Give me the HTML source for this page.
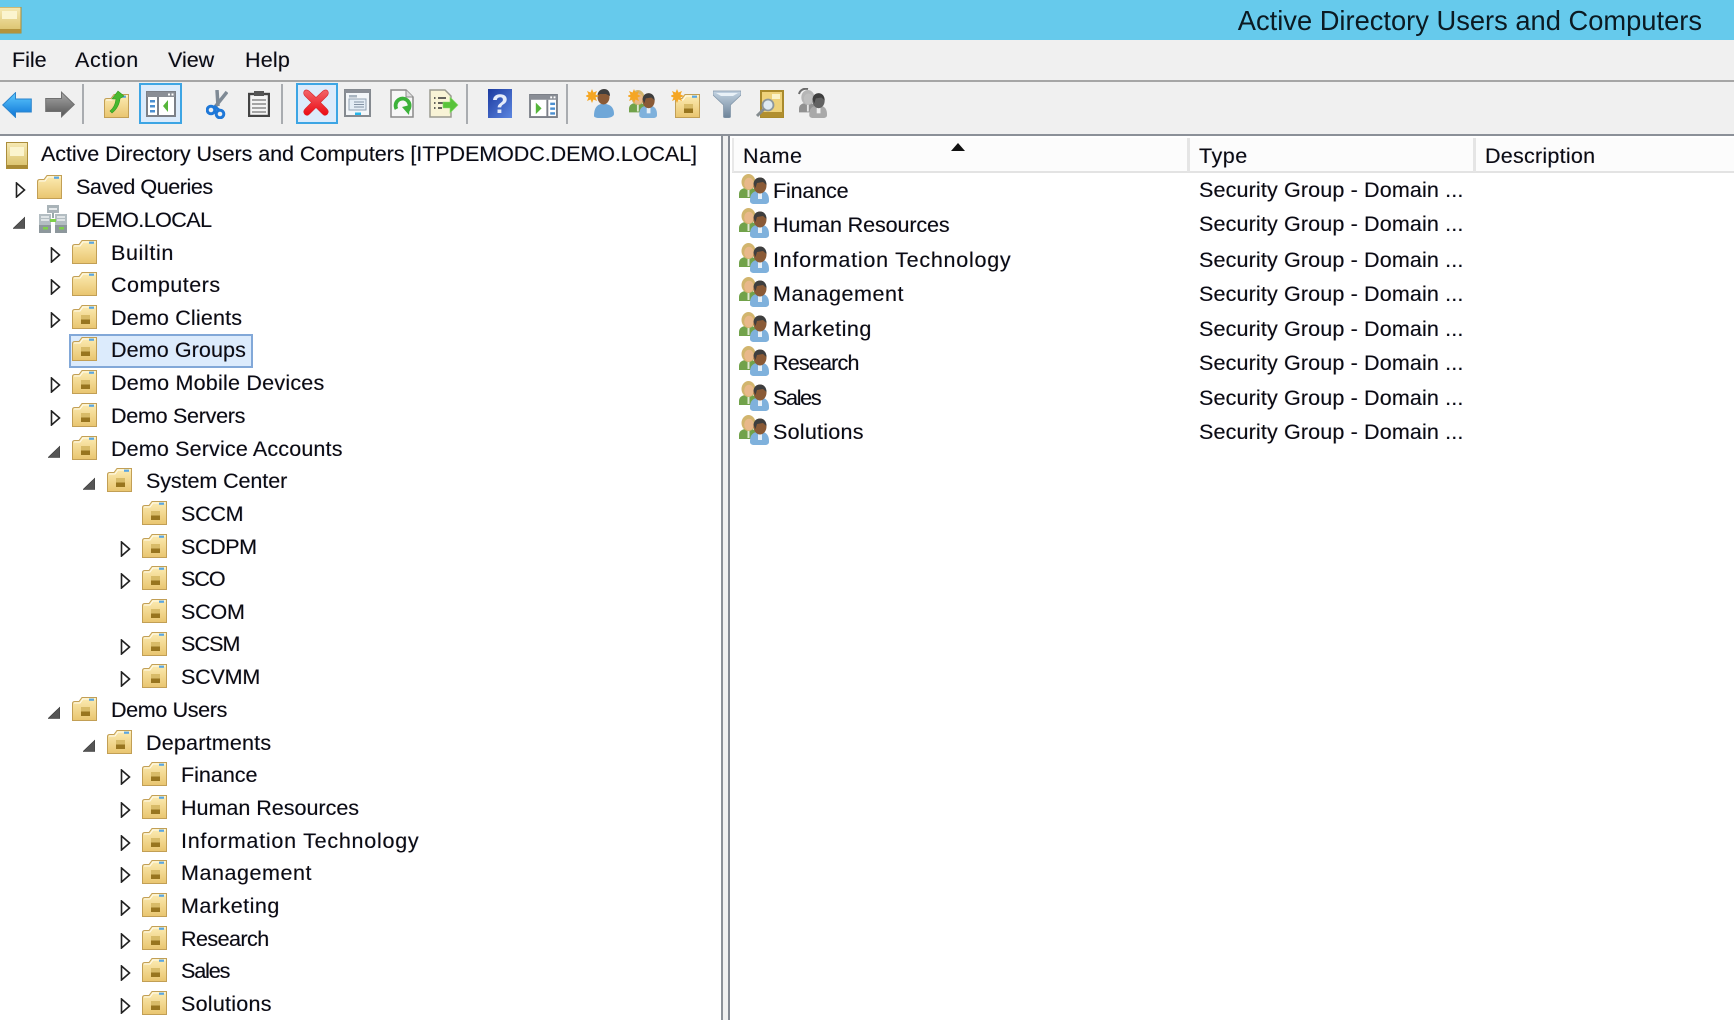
<!DOCTYPE html>
<html lang="en"><head><meta charset="utf-8"><title>Active Directory Users and Computers</title>
<style>
html,body{margin:0;padding:0;width:1734px;height:1020px;overflow:hidden;background:#fff}
body{position:relative;font-family:"Liberation Sans",Arial,sans-serif;font-size:21.5px;color:#0a0a14}
.a{position:absolute}
#title{left:0;top:0;width:1734px;height:40px;background:#66caec}
#ttext{position:absolute;right:32px;top:3px;line-height:36px;font-size:27.3px;color:#0b1a22;white-space:nowrap}
#menu{left:0;top:40px;width:1734px;height:40px;background:#f0f0f0}
#menu span{position:absolute;top:3px;line-height:34px}
#tb{left:0;top:82px;width:1734px;height:52px;background:#f0f0f0}
.l1{left:0;width:1734px;height:2px}
.sep{top:84px;width:2px;height:40px;background:#a9acb0}
.btn{top:83px;height:37px;background:#dcebfb;border:2px solid #3da5e4}
.t{position:absolute;height:32px;line-height:32px;white-space:nowrap;text-shadow:-.45px 0 rgba(230,120,0,.35),.45px 0 rgba(0,110,240,.35)}
.t svg{position:absolute;overflow:visible}
.t span{position:absolute;top:0}
.i{left:22px;top:4px;width:26px;height:24px}
.x{left:0;width:12px;height:16px;top:11px}
.n span{left:61px;top:1px}
.r span{left:34px}
.g{left:0;top:-1px;width:30px;height:30px}
.h{position:absolute;top:140px;line-height:32px;white-space:nowrap;text-shadow:-.45px 0 rgba(230,120,0,.35),.45px 0 rgba(0,110,240,.35)}
#menu span,.ty{text-shadow:-.45px 0 rgba(230,120,0,.35),.45px 0 rgba(0,110,240,.35)}
.ty{position:absolute;left:1199px;line-height:32px;white-space:nowrap;letter-spacing:.15px}
#all{position:absolute;left:0;top:0;width:1734px;height:1020px;filter:blur(.35px)}
</style></head>
<body>
<svg width="0" height="0" style="position:absolute">
<defs>
<linearGradient id="fg" x1="0" y1="0" x2="0" y2="1"><stop offset="0" stop-color="#fcecb4"/><stop offset="1" stop-color="#e9c56f"/></linearGradient>
<linearGradient id="rootg" x1="0" y1="0" x2="0" y2="1"><stop offset="0" stop-color="#f6e9b4"/><stop offset="1" stop-color="#d9c069"/></linearGradient>
<linearGradient id="bl" x1="0" y1="0" x2="0" y2="1"><stop offset="0" stop-color="#5fcbff"/><stop offset="1" stop-color="#0d74d6"/></linearGradient>
<linearGradient id="gy" x1="0" y1="0" x2="0" y2="1"><stop offset="0" stop-color="#a9a9a9"/><stop offset="1" stop-color="#555"/></linearGradient>
<linearGradient id="rd" x1="0" y1="0" x2="0" y2="1"><stop offset="0" stop-color="#f2656a"/><stop offset="1" stop-color="#ec0b14"/></linearGradient>
<linearGradient id="hb" x1="0" y1="0" x2="1" y2="1"><stop offset="0" stop-color="#1c3aa0"/><stop offset="1" stop-color="#5c86e0"/></linearGradient>
<linearGradient id="fu" x1="0" y1="0" x2="0" y2="1"><stop offset="0" stop-color="#c3d3e2"/><stop offset="1" stop-color="#6e8499"/></linearGradient>
<symbol id="ou" viewBox="0 0 26 24"><path d="M.5 6.5C.5 5 1.5 4.5 3 4.5H7L10 .5H24.5V23.5H.5Z" fill="url(#fg)" stroke="#c29f55"/><path d="M2 6H8L11 2H23.5" fill="none" stroke="#fff" stroke-opacity=".8"/><rect x="17" y="1.6" width="5" height="2.2" fill="#5aa6e2"/><rect x="9" y="10" width="9" height="4.500" fill="#d8bb68"/><rect x="9" y="14.500" width="9" height="4.500" fill="#98751f"/></symbol>
<symbol id="pf" viewBox="0 0 26 24"><path d="M.5 6.5C.5 5 1.5 4.5 3 4.5H7L10 .5H24.5V23.5H.5Z" fill="url(#fg)" stroke="#c29f55"/><path d="M2 6H8L11 2H23.5" fill="none" stroke="#fff" stroke-opacity=".8"/><rect x="17" y="1.6" width="5" height="2.2" fill="#5aa6e2"/></symbol>
<symbol id="c" viewBox="0 0 12 16"><path d="M1.5 1V15L9.5 8Z" fill="#fff" stroke="#222" stroke-width="1.6"/></symbol>
<symbol id="e" viewBox="0 0 12 16"><path d="M0 14.5H12V3Z" fill="#555" stroke="#333" stroke-width=".6"/></symbol>
<symbol id="grp" viewBox="0 0 30 30">
<path d="M0 20C0 16 3 14.500 6 14H13C16 15 18 17 18 21V24H0Z" fill="#71a24a"/><rect x="8.500" y="15" width="2" height="8" fill="#dfe8cf"/>
<ellipse cx="9.500" cy="8" rx="7" ry="8" fill="#d2b56e"/><ellipse cx="10" cy="9.500" rx="4.800" ry="5.800" fill="#e8b88a"/>
<path d="M11 26C11 20 14 17.500 18 17H24C28 18 30 21 30 26V27C30 29 28 30 26 30H15C13 30 11 29 11 27Z" fill="#7fb1dc"/><rect x="19" y="18" width="4" height="7" fill="#e6f0f8"/>
<ellipse cx="21" cy="11.500" rx="6.500" ry="8" fill="#8a5a36"/><path d="M14.500 10C15 5 18 3.500 21 3.500C25 3.500 27.500 6.500 27.500 11L24 8L18 9L16.500 14Z" fill="#3e3e3e"/>
</symbol>
</defs></svg>
<div id="all">
<div class="a" id="title">
<svg class="a" style="left:0;top:7px" width="22" height="27" viewBox="0 0 22 27"><rect x="-2" y="0" width="23" height="26" fill="url(#rootg)" stroke="#a98a35"/><rect x="2" y="4" width="15" height="8" fill="#fbf4cf"/><rect x="-2" y="22" width="23" height="4" fill="#b3933c"/></svg>
<div id="ttext">Active Directory Users and Computers</div></div>
<div class="a" id="menu"><span style="left:12px">File</span><span style="left:75px;letter-spacing:.7px">Action</span><span style="left:168px">View</span><span style="left:245px;letter-spacing:.2px">Help</span></div>
<div class="a l1" style="top:80px;height:2px;background:#a6a6a6"></div>
<div class="a" id="tb"></div>
<div class="a l1" style="top:134px;background:#8b9098"></div>

<div class="a btn" style="left:139px;width:39px"></div>
<div class="a btn" style="left:296px;width:38px"></div>
<div class="a sep" style="left:82px"></div><div class="a sep" style="left:281px"></div><div class="a sep" style="left:466px"></div><div class="a sep" style="left:566px"></div>

<svg class="a" style="left:2px;top:92px" width="30" height="26" viewBox="0 0 30 26"><path d="M.7 13 13.500 .7V7H29.300V20H13.500V25.300Z" fill="url(#bl)" stroke="#2c84cc"/></svg>
<svg class="a" style="left:45px;top:91px" width="30" height="27" viewBox="0 0 30 26"><path d="M29.300 13 16.500 .7V7H.7V20H16.500V25.300Z" fill="url(#gy)" stroke="#707070"/></svg>
<svg class="a" style="left:104px;top:90px" width="26" height="28" viewBox="0 0 26 28"><use href="#pf" y="4" width="26" height="24"/><path d="M6 21C10 18 11.500 13 12 9H8L14 1 20 6 16 8.500C15.500 14 13 19 8 23Z" fill="#48b82f" stroke="#2f9a1e" stroke-width=".6"/></svg>
<svg class="a" style="left:146px;top:91px" width="30" height="26" viewBox="0 0 30 26"><rect x="1" y="1" width="28" height="24" fill="#fff" stroke="#7c8088" stroke-width="2"/><rect x="1" y="1" width="28" height="5" fill="#8a8e96"/><rect x="22" y="2.500" width="2" height="2" fill="#fff"/><rect x="25.500" y="2.500" width="2" height="2" fill="#fff"/><rect x="11" y="6" width="2" height="18" fill="#7c8088"/><rect x="4" y="9" width="5" height="2.500" fill="#4b8fd0"/><rect x="4" y="14" width="5" height="2.500" fill="#4b8fd0"/><rect x="4" y="19" width="5" height="2.500" fill="#4b8fd0"/><path d="M22 9V21L17 15Z" fill="#55b53a"/></svg>
<svg class="a" style="left:206px;top:90px" width="22" height="29" viewBox="0 0 22 29"><path d="M11 0 12 16M21 2 9 17" stroke="#7f8a95" stroke-width="3.500" fill="none"/><circle cx="5" cy="20" r="3.800" fill="none" stroke="#1f78d8" stroke-width="3"/><circle cx="14" cy="24" r="3.800" fill="none" stroke="#1f78d8" stroke-width="3"/><path d="M8 16 13 20" stroke="#1f78d8" stroke-width="3"/></svg>
<svg class="a" style="left:248px;top:91px" width="22" height="26" viewBox="0 0 22 26"><rect x="1" y="3" width="20" height="22" fill="#f4f4f4" stroke="#444" stroke-width="2.400"/><rect x="6" y="0" width="10" height="5" fill="#555"/><path d="M4 9H18M4 13H18M4 17H18M4 21H18" stroke="#999" stroke-width="1.800"/></svg>
<svg class="a" style="left:301px;top:88px" width="30" height="29" viewBox="0 0 30 29"><path d="M3 3.500C4 1.500 6 1.500 8 3L15 9.500 22 3C24 1.500 26 1.500 27 3.500S27 7 25.500 8.500L19.500 14.500 25.500 20.500C27 22 28 24 26.500 26S23 27.500 21.500 26L15 19.500 8.500 26C7 27.500 5 28 3.500 26S3 22 4.500 20.500L10.500 14.500 4.500 8.500C3 7 2 5.500 3 3.500Z" fill="url(#rd)" stroke="#d9262c" stroke-width=".6"/></svg>
<svg class="a" style="left:344px;top:89px" width="27" height="28" viewBox="0 0 27 28"><rect x="1" y="1" width="25" height="26" fill="#f3f6f9" stroke="#858a90" stroke-width="2"/><rect x="1" y="1" width="25" height="3" fill="#8a8e96"/><rect x="5" y="6" width="8" height="2.500" fill="#a8b4c0"/><rect x="5" y="10" width="17" height="11" fill="#e4edf5" stroke="#93a3b4" stroke-width="1"/><path d="M10 13H20M10 15.500H20M10 18H20" stroke="#8191a3"/><rect x="11" y="23.500" width="6" height="2.500" fill="#27b5ea"/></svg>
<svg class="a" style="left:390px;top:89px" width="24" height="29" viewBox="0 0 24 29"><path d="M1 1H16L23 8V28H1Z" fill="#f7f7f7" stroke="#8a8a8a" stroke-width="1.500"/><path d="M16 1V8H23" fill="#ddd" stroke="#8a8a8a"/><path d="M6.500 20A7 7 0 1 1 17 22" fill="none" stroke="#3cb23a" stroke-width="3.800"/><path d="M12 18 20 16 19 26Z" fill="#3cb23a"/></svg>
<svg class="a" style="left:429px;top:89px" width="30" height="29" viewBox="0 0 30 29"><path d="M1 1H16L22 7V28H1Z" fill="#f8f3d6" stroke="#9a9a90" stroke-width="1.500"/><path d="M5 9H6.500M9 9H17M5 14H6.500M9 14H15M5 19H6.500M9 19H13" stroke="#333" stroke-width="1.500"/><path d="M14 13H21V8L29 16 21 24V19H14Z" fill="#58c33a" stroke="#8bd96f" stroke-width=".6"/></svg>
<svg class="a" style="left:488px;top:89px" width="24" height="29" viewBox="0 0 24 29"><rect width="24" height="29" fill="url(#hb)"/><text x="12" y="24" text-anchor="middle" font-family="Liberation Sans" font-size="27" font-weight="bold" fill="#e6ecfa">?</text></svg>
<svg class="a" style="left:529px;top:94px" width="29" height="24" viewBox="0 0 30 25"><rect x="1" y="1" width="28" height="23" fill="#fff" stroke="#7c8088" stroke-width="2"/><rect x="1" y="1" width="28" height="5" fill="#8a8e96"/><rect x="22" y="2.500" width="2" height="2" fill="#fff"/><rect x="25.500" y="2.500" width="2" height="2" fill="#fff"/><rect x="18" y="6" width="2" height="18" fill="#7c8088"/><rect x="22" y="9" width="5" height="2.500" fill="#4b8fd0"/><rect x="22" y="14" width="5" height="2.500" fill="#4b8fd0"/><rect x="22" y="19" width="5" height="2.500" fill="#4b8fd0"/><path d="M7 9V21L13 15Z" fill="#55b53a"/></svg>
<svg class="a" style="left:586px;top:89px" width="28" height="29" viewBox="0 0 28 29"><path d="M8 27C8 19 11 16 15 15H20C25 16 28 19 28 25 28 27 25 29 20 29H13C10 29 8 28 8 27Z" fill="#6fa7d8"/><ellipse cx="17.500" cy="8" rx="6" ry="7.500" fill="#8a5a36"/><path d="M11.500 6C12 2 15 0 18 0 22 0 24 3 24 7L20 5H14Z" fill="#3e3e3e"/><path d="M6 0 7.500 3.500 11 2 9.500 5.500 13 7 9.500 8.500 11 12 7.500 10.500 6 14 4.500 10.500 1 12 2.500 8.500-1 7 2.500 5.500 1 2 4.500 3.500Z" fill="#f5a623"/></svg>
<svg class="a" style="left:628px;top:89px" width="30" height="29" viewBox="0 0 30 29"><use href="#grp" x="0" y="1" width="30" height="28"/><path d="M6 0 7.500 3.500 11 2 9.500 5.500 13 7 9.500 8.500 11 12 7.500 10.500 6 14 4.500 10.500 1 12 2.500 8.500-1 7 2.500 5.500 1 2 4.500 3.500Z" fill="#f5a623"/></svg>
<svg class="a" style="left:671px;top:89px" width="30" height="29" viewBox="0 0 30 29"><use href="#ou" x="4" y="5" width="26" height="24"/><path d="M6 0 7.500 3.500 11 2 9.500 5.500 13 7 9.500 8.500 11 12 7.500 10.500 6 14 4.500 10.500 1 12 2.500 8.500-1 7 2.500 5.500 1 2 4.500 3.500Z" fill="#f5a623"/></svg>
<svg class="a" style="left:713px;top:90px" width="28" height="28" viewBox="0 0 28 28"><path d="M0 1H28V5L17.500 15V27C17.500 28 10.500 28 10.500 27V15L0 5Z" fill="url(#fu)" stroke="#7f93a6" stroke-width=".7"/><path d="M3 3H25L20 6H8Z" fill="#e9f1f7"/></svg>
<svg class="a" style="left:756px;top:90px" width="28" height="28" viewBox="0 0 28 28"><rect x="5" y="1" width="22" height="26" fill="#eed27a" stroke="#a98a2c" stroke-width="2"/><rect x="5" y="22" width="22" height="5" fill="#b18f2f"/><rect x="16" y="4" width="8" height="5" fill="#fbf3c8"/><circle cx="12" cy="15" r="5.500" fill="#dfeaf0" stroke="#8d979c" stroke-width="1.800"/><path d="M8 19 1 26" stroke="#858c8f" stroke-width="3"/></svg>
<svg class="a" style="left:798px;top:88px" width="30" height="30" viewBox="0 0 30 30"><g style="filter:grayscale(1)"><use href="#grp" x="0" y="2" width="30" height="28"/></g><path d="M1 6C2 2 6 0 10 1" fill="none" stroke="#6c6c6c" stroke-width="2"/></svg>

<div class="a" style="left:721px;top:136px;width:2px;height:884px;background:#8c9198"></div>
<div class="a" style="left:723px;top:136px;width:5px;height:884px;background:#f0f0f0"></div>
<div class="a" style="left:728px;top:136px;width:2px;height:884px;background:#858a93"></div>

<div class="a" style="left:732px;top:138px;width:1002px;height:33px;background:#fcfcfc;border-bottom:2px solid #e3e3e3"></div>
<div class="a" style="left:732px;top:138px;width:2px;height:34px;background:#e8e8e8"></div>
<div class="a" style="left:1187px;top:138px;width:3px;height:34px;background:#e5e5e5"></div>
<div class="a" style="left:1473px;top:138px;width:3px;height:34px;background:#e5e5e5"></div>
<div class="h" style="left:743px;letter-spacing:.55px">Name</div><div class="h" style="left:1199px;letter-spacing:.55px">Type</div><div class="h" style="left:1485px;letter-spacing:.25px">Description</div>
<svg class="a" style="left:951px;top:143px" width="14" height="8" viewBox="0 0 14 8"><path d="M7 0 14 8H0Z" fill="#111"/></svg>

<div class="t r" style="left:739px;top:175px"><svg class="g"><use href="#grp"/></svg><span style="letter-spacing:-.15px">Finance</span></div><div class="ty" style="top:174px">Security Group - Domain ...</div>
<div class="t r" style="left:739px;top:209px"><svg class="g"><use href="#grp"/></svg><span style="letter-spacing:-.1px">Human Resources</span></div><div class="ty" style="top:208px">Security Group - Domain ...</div>
<div class="t r" style="left:739px;top:244px"><svg class="g"><use href="#grp"/></svg><span style="letter-spacing:.75px">Information Technology</span></div><div class="ty" style="top:244px">Security Group - Domain ...</div>
<div class="t r" style="left:739px;top:278px"><svg class="g"><use href="#grp"/></svg><span style="letter-spacing:.55px">Management</span></div><div class="ty" style="top:278px">Security Group - Domain ...</div>
<div class="t r" style="left:739px;top:313px"><svg class="g"><use href="#grp"/></svg><span style="letter-spacing:.49px">Marketing</span></div><div class="ty" style="top:313px">Security Group - Domain ...</div>
<div class="t r" style="left:739px;top:347px"><svg class="g"><use href="#grp"/></svg><span style="letter-spacing:-.8px">Research</span></div><div class="ty" style="top:347px">Security Group - Domain ...</div>
<div class="t r" style="left:739px;top:382px"><svg class="g"><use href="#grp"/></svg><span style="letter-spacing:-1.3px">Sales</span></div><div class="ty" style="top:382px">Security Group - Domain ...</div>
<div class="t r" style="left:739px;top:416px"><svg class="g"><use href="#grp"/></svg><span style="letter-spacing:.25px">Solutions</span></div><div class="ty" style="top:416px">Security Group - Domain ...</div>

<div class="a" style="left:69px;top:334px;width:180px;height:30px;background:#dcebfc;border:2px solid #82a8d8"></div>

<svg class="a" style="left:6px;top:142px" width="22" height="27" viewBox="0 0 22 27"><rect x=".5" y=".5" width="21" height="26" fill="url(#rootg)" stroke="#ab8d3b"/><rect x="4" y="5" width="14" height="9" fill="#fbf4cf"/><rect x=".5" y="23" width="21" height="3.500" fill="#a98a35"/></svg>
<div class="t" style="left:41px;top:138px"><span style="left:0;letter-spacing:-.06px">Active Directory Users and Computers [ITPDEMODC.DEMO.LOCAL]</span></div>

<div class="t n" style="left:15px;top:171px"><svg class="x"><use href="#c"/></svg><svg class="i"><use href="#pf"/></svg><span style="top:0;letter-spacing:-.42px">Saved Queries</span></div>
<div class="t n" style="left:13px;top:203px"><svg class="x"><use href="#e"/></svg><svg class="a" style="left:26px;top:2px;width:28px;height:28px" viewBox="0 0 28 28"><rect x="8" y="0" width="12" height="8" fill="#a9b3b8"/><rect x="10" y="3" width="8" height="2" fill="#e6eaec"/><path d="M14 8V13" stroke="#9aa" stroke-width="2"/><rect x="0" y="9" width="12" height="19" fill="#b3bdc2"/><rect x="16" y="9" width="12" height="19" fill="#b3bdc2"/><path d="M2 12H10M2 15H10M18 12H26M18 15H26" stroke="#eef1f2" stroke-width="1.500"/><rect x="0" y="20" width="12" height="8" fill="#8d979c"/><rect x="16" y="20" width="12" height="8" fill="#8d979c"/><rect x="4" y="22" width="5" height="2.500" fill="#7ed04b"/><rect x="20" y="22" width="5" height="2.500" fill="#7ed04b"/><rect x="11" y="14" width="6" height="3" fill="#7ed04b"/></svg><span style="left:63px;letter-spacing:-.55px">DEMO.LOCAL</span></div>

<div class="t n" style="left:50px;top:236px"><svg class="x"><use href="#c"/></svg><svg class="i"><use href="#pf"/></svg><span style="letter-spacing:.63px">Builtin</span></div>
<div class="t n" style="left:50px;top:268px"><svg class="x"><use href="#c"/></svg><svg class="i"><use href="#pf"/></svg><span style="letter-spacing:.49px">Computers</span></div>
<div class="t n" style="left:50px;top:301px"><svg class="x"><use href="#c"/></svg><svg class="i"><use href="#ou"/></svg><span style="letter-spacing:.18px">Demo Clients</span></div>
<div class="t n" style="left:50px;top:333px"><svg class="i"><use href="#ou"/></svg><span style="letter-spacing:.1px">Demo Groups</span></div>
<div class="t n" style="left:50px;top:366px"><svg class="x"><use href="#c"/></svg><svg class="i"><use href="#ou"/></svg><span style="letter-spacing:.23px">Demo Mobile Devices</span></div>
<div class="t n" style="left:50px;top:399px"><svg class="x"><use href="#c"/></svg><svg class="i"><use href="#ou"/></svg><span style="letter-spacing:-.27px">Demo Servers</span></div>
<div class="t n" style="left:48px;top:432px"><svg class="x"><use href="#e"/></svg><svg class="i" style="left:24px"><use href="#ou"/></svg><span style="left:63px;letter-spacing:.16px">Demo Service Accounts</span></div>
<div class="t n" style="left:83px;top:464px"><svg class="x"><use href="#e"/></svg><svg class="i" style="left:24px"><use href="#ou"/></svg><span style="left:63px;letter-spacing:-.08px">System Center</span></div>
<div class="t n" style="left:120px;top:497px"><svg class="i"><use href="#ou"/></svg><span style="letter-spacing:-.25px">SCCM</span></div>
<div class="t n" style="left:120px;top:530px"><svg class="x"><use href="#c"/></svg><svg class="i"><use href="#ou"/></svg><span style="letter-spacing:-.4px">SCDPM</span></div>
<div class="t n" style="left:120px;top:562px"><svg class="x"><use href="#c"/></svg><svg class="i"><use href="#ou"/></svg><span style="letter-spacing:-1px">SCO</span></div>
<div class="t n" style="left:120px;top:595px"><svg class="i"><use href="#ou"/></svg><span style="letter-spacing:-.2px">SCOM</span></div>
<div class="t n" style="left:120px;top:628px"><svg class="x"><use href="#c"/></svg><svg class="i"><use href="#ou"/></svg><span style="letter-spacing:-.9px;top:0">SCSM</span></div>
<div class="t n" style="left:120px;top:660px"><svg class="x"><use href="#c"/></svg><svg class="i"><use href="#ou"/></svg><span style="letter-spacing:-.2px">SCVMM</span></div>
<div class="t n" style="left:48px;top:693px"><svg class="x"><use href="#e"/></svg><svg class="i" style="left:24px"><use href="#ou"/></svg><span style="left:63px;letter-spacing:-.35px">Demo Users</span></div>
<div class="t n" style="left:83px;top:726px"><svg class="x"><use href="#e"/></svg><svg class="i" style="left:24px"><use href="#ou"/></svg><span style="left:63px;letter-spacing:.2px">Departments</span></div>
<div class="t n" style="left:120px;top:758px"><svg class="x"><use href="#c"/></svg><svg class="i"><use href="#ou"/></svg><span>Finance</span></div>
<div class="t n" style="left:120px;top:791px"><svg class="x"><use href="#c"/></svg><svg class="i"><use href="#ou"/></svg><span>Human Resources</span></div>
<div class="t n" style="left:120px;top:824px"><svg class="x"><use href="#c"/></svg><svg class="i"><use href="#ou"/></svg><span style="letter-spacing:.75px">Information Technology</span></div>
<div class="t n" style="left:120px;top:856px"><svg class="x"><use href="#c"/></svg><svg class="i"><use href="#ou"/></svg><span style="letter-spacing:.55px">Management</span></div>
<div class="t n" style="left:120px;top:889px"><svg class="x"><use href="#c"/></svg><svg class="i"><use href="#ou"/></svg><span style="letter-spacing:.49px">Marketing</span></div>
<div class="t n" style="left:120px;top:922px"><svg class="x"><use href="#c"/></svg><svg class="i"><use href="#ou"/></svg><span style="letter-spacing:-.55px">Research</span></div>
<div class="t n" style="left:120px;top:954px"><svg class="x"><use href="#c"/></svg><svg class="i"><use href="#ou"/></svg><span style="letter-spacing:-1.1px">Sales</span></div>
<div class="t n" style="left:120px;top:987px"><svg class="x"><use href="#c"/></svg><svg class="i"><use href="#ou"/></svg><span style="letter-spacing:.25px">Solutions</span></div>
</div>
</body></html>
